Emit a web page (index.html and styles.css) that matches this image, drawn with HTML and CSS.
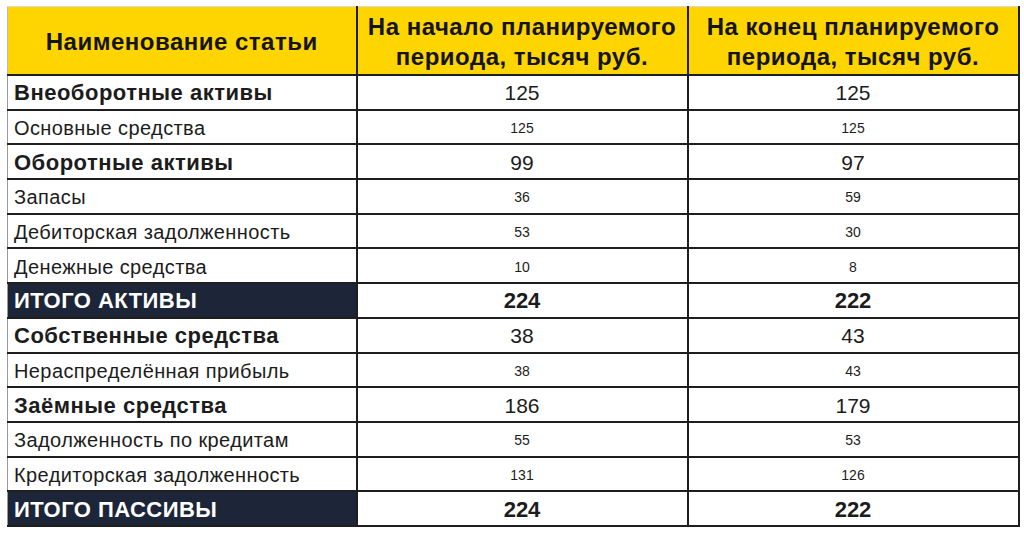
FILE: index.html
```html
<!DOCTYPE html>
<html lang="ru">
<head>
<meta charset="utf-8">
<link rel="stylesheet" href="styles.css">
</head>
<body>
<table class="bal">
  <colgroup><col class="c1"><col class="c2"><col class="c3"></colgroup>
  <thead>
    <tr class="head">
      <th>Наименование статьи</th>
      <th>На начало планируемого<br>периода, тысяч руб.</th>
      <th>На конец планируемого<br>периода, тысяч руб.</th>
    </tr>
  </thead>
  <tbody>
    <tr class="grp"><td>Внеоборотные активы</td><td>125</td><td>125</td></tr>
    <tr class="sub"><td>Основные средства</td><td>125</td><td>125</td></tr>
    <tr class="grp"><td>Оборотные активы</td><td>99</td><td>97</td></tr>
    <tr class="sub"><td>Запасы</td><td>36</td><td>59</td></tr>
    <tr class="sub"><td>Дебиторская задолженность</td><td>53</td><td>30</td></tr>
    <tr class="sub"><td>Денежные средства</td><td>10</td><td>8</td></tr>
    <tr class="tot"><td>ИТОГО АКТИВЫ</td><td>224</td><td>222</td></tr>
    <tr class="grp"><td>Собственные средства</td><td>38</td><td>43</td></tr>
    <tr class="sub"><td>Нераспределённая прибыль</td><td>38</td><td>43</td></tr>
    <tr class="grp"><td>Заёмные средства</td><td>186</td><td>179</td></tr>
    <tr class="sub"><td>Задолженность по кредитам</td><td>55</td><td>53</td></tr>
    <tr class="sub"><td>Кредиторская задолженность</td><td>131</td><td>126</td></tr>
    <tr class="tot"><td>ИТОГО ПАССИВЫ</td><td>224</td><td>222</td></tr>
  </tbody>
</table>
</body>
</html>
```
FILE: styles.css
```css
html, body {
  margin: 0;
  background: #ffffff;
}
body {
  padding: 6px 0 0 7px;
  font-family: "Liberation Sans", Arial, sans-serif;
  color: #1c1c1c;
}
.bal {
  border-collapse: collapse;
  width: 1011px;
  table-layout: fixed;
}
.c1 { width: 349px; }
.c2 { width: 331px; }
.c3 { width: 331px; }
.bal td, .bal th {
  border: 2px solid #1e1e1e;
  padding: 2px 6px 0;
  vertical-align: middle;
  white-space: nowrap;
  line-height: 30px;
}
.head th {
  background: #ffd500;
  height: 64px;
  font-size: 24px;
  font-weight: bold;
  line-height: 30px;
  letter-spacing: 0.5px;
  text-align: center;
  border-top: 1px solid #d8d8d8;
  color: #141414;
  padding: 3px 0 0;
}
.head th:first-child { border-left: 1px solid #bcbcbc; }
.bal tbody tr { height: 34.7px; }
.bal tbody td:first-child { border-left: 1px solid #9a9a9a; }
.bal tbody td + td { text-align: center; }
.grp td:first-child { font-weight: bold; font-size: 22px; letter-spacing: 0.5px; }
.grp td + td { font-size: 21px; }
.sub td:first-child { font-size: 20px; letter-spacing: 0.4px; }
.sub td + td { font-size: 14px; }
.tot td:first-child {
  background: #1d2538;
  color: #ffffff;
  font-weight: bold;
  font-size: 22px;
  letter-spacing: 0.45px;
}
.tot td + td { font-weight: bold; font-size: 22px; }
```
